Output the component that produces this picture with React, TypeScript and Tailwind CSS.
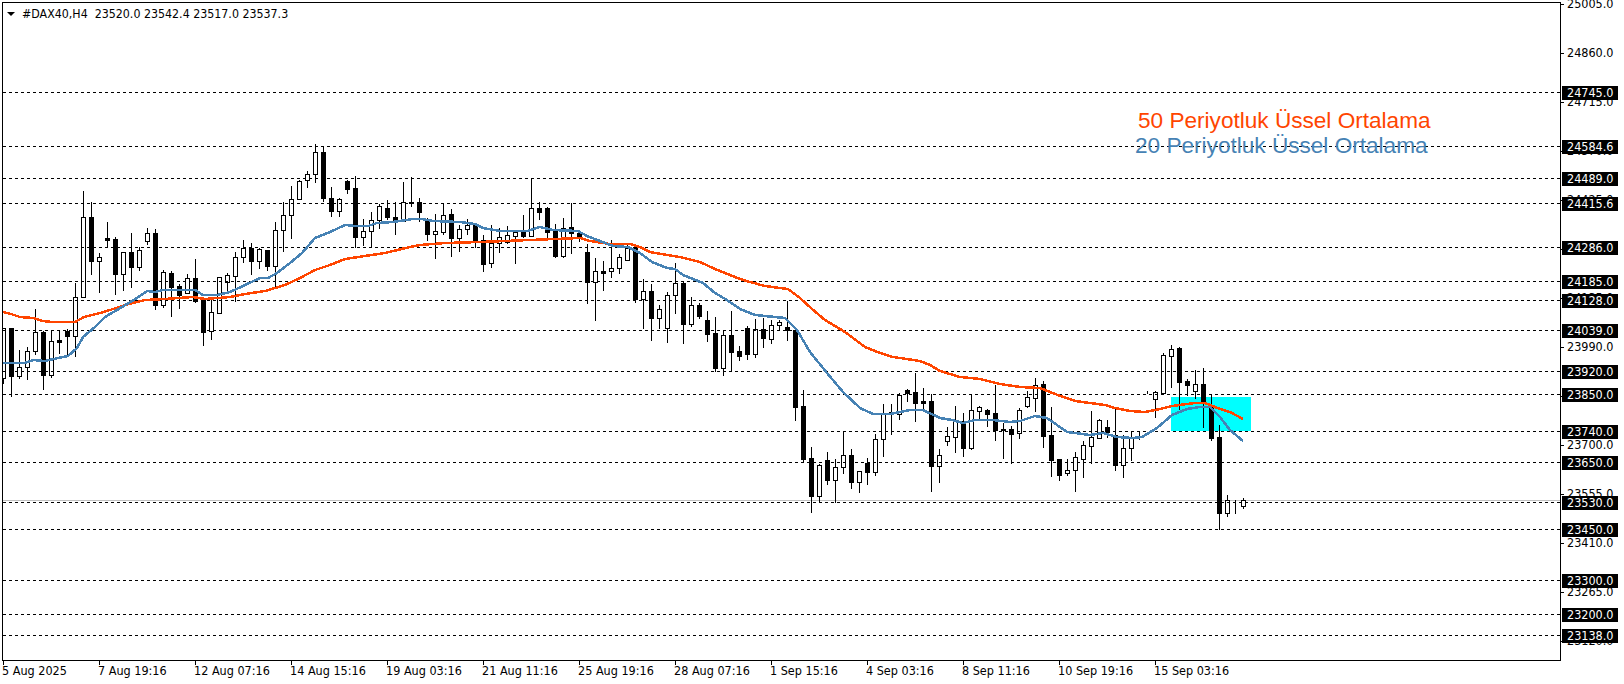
// DAX40 H4 chart, everything in the svg is in page pixels
type Candle = [number, number, number, number, number] // bull, high, bodyTop, bodyBottom, low

const candles: Candle[] = [
    [1, 328, 328, 378, 383], [0, 328, 328, 376, 396], [1, 350, 367, 376, 378], [1, 347, 351, 367, 379],
    [1, 309, 332, 351, 354], [0, 331, 332, 375, 389], [1, 330, 341, 375, 377], [0, 330, 340, 342, 353],
    [0, 329, 331, 336, 355], [1, 283, 297, 336, 356], [1, 191, 217, 297, 297], [0, 202, 217, 261, 274],
    [1, 253, 257, 261, 292], [0, 222, 238, 240, 246], [0, 237, 239, 274, 294], [1, 252, 252, 274, 290],
    [0, 233, 252, 267, 287], [1, 247, 250, 267, 270], [1, 228, 233, 241, 244], [0, 229, 233, 305, 309],
    [1, 270, 272, 305, 307], [0, 271, 273, 287, 316], [0, 284, 286, 295, 308], [1, 274, 278, 293, 293],
    [0, 259, 278, 301, 302], [0, 300, 300, 332, 345], [1, 300, 312, 331, 339], [1, 277, 277, 313, 313],
    [1, 273, 275, 282, 292], [1, 252, 257, 276, 301], [1, 240, 248, 257, 262], [0, 243, 248, 261, 274],
    [1, 248, 249, 261, 268], [0, 250, 250, 266, 270], [1, 222, 230, 266, 286], [1, 202, 215, 230, 251],
    [1, 186, 199, 215, 238], [1, 180, 181, 199, 199], [1, 171, 174, 180, 187], [1, 144, 152, 174, 182],
    [0, 146, 152, 198, 201], [0, 187, 198, 211, 216], [1, 198, 199, 211, 216], [0, 180, 181, 189, 193],
    [0, 176, 188, 237, 247], [1, 219, 231, 237, 245], [1, 212, 220, 231, 246], [1, 204, 206, 220, 228],
    [0, 200, 208, 217, 219], [0, 202, 217, 221, 234], [1, 182, 202, 221, 221], [0, 177, 202, 203, 206],
    [0, 198, 202, 212, 221], [0, 218, 219, 234, 240], [1, 214, 231, 234, 258], [1, 203, 215, 232, 234],
    [0, 209, 214, 238, 256], [1, 225, 229, 238, 251], [1, 219, 225, 229, 234], [0, 225, 225, 242, 247],
    [0, 235, 240, 264, 271], [1, 225, 243, 263, 267], [1, 228, 237, 243, 252], [1, 226, 235, 242, 243],
    [1, 232, 232, 236, 263], [0, 215, 232, 236, 237], [1, 178, 208, 236, 236], [0, 202, 208, 212, 219],
    [0, 207, 208, 232, 237], [0, 224, 231, 256, 257], [1, 218, 228, 256, 257], [0, 203, 227, 233, 253],
    [0, 230, 233, 238, 241], [0, 244, 252, 282, 303], [1, 258, 271, 282, 320], [0, 261, 271, 273, 290],
    [1, 240, 268, 271, 277], [1, 254, 257, 268, 273], [1, 243, 248, 260, 260], [0, 247, 247, 299, 302],
    [1, 279, 291, 299, 328], [0, 284, 291, 318, 340], [1, 305, 309, 318, 328], [1, 292, 295, 328, 342],
    [1, 263, 283, 295, 313], [0, 282, 283, 324, 343], [1, 297, 305, 324, 326], [0, 303, 305, 316, 318],
    [0, 311, 320, 334, 341], [0, 317, 333, 368, 371], [1, 330, 335, 368, 375], [0, 311, 335, 352, 371],
    [0, 346, 351, 356, 360], [0, 326, 328, 354, 359], [1, 319, 329, 354, 357], [0, 318, 329, 338, 347],
    [1, 320, 325, 339, 343], [1, 320, 322, 325, 329], [0, 301, 327, 330, 340], [0, 330, 330, 407, 420],
    [0, 390, 406, 459, 461], [0, 447, 458, 496, 512], [1, 464, 465, 496, 502], [0, 452, 460, 480, 484],
    [1, 459, 467, 480, 502], [1, 432, 455, 467, 473], [0, 449, 455, 482, 488], [1, 471, 471, 482, 492],
    [0, 458, 463, 472, 484], [1, 434, 439, 472, 475], [1, 404, 413, 439, 456], [0, 404, 412, 414, 434],
    [1, 393, 395, 414, 419], [0, 389, 390, 393, 401], [0, 373, 392, 403, 421], [0, 388, 401, 403, 409],
    [0, 394, 401, 466, 491], [1, 449, 455, 466, 482], [1, 427, 436, 441, 445], [1, 406, 421, 437, 452],
    [0, 413, 421, 448, 456], [1, 394, 410, 448, 449], [1, 406, 407, 411, 420], [0, 409, 410, 414, 426],
    [0, 385, 413, 430, 440], [0, 423, 429, 430, 458], [0, 426, 429, 434, 463], [1, 408, 410, 433, 438],
    [1, 391, 397, 406, 407], [1, 378, 385, 398, 411], [0, 381, 384, 436, 447], [0, 407, 435, 460, 476],
    [0, 459, 459, 475, 480], [1, 459, 470, 473, 475], [1, 452, 457, 470, 491], [1, 441, 445, 459, 477],
    [1, 411, 437, 446, 463], [1, 419, 420, 438, 438], [0, 420, 427, 432, 437], [0, 409, 435, 465, 470],
    [1, 435, 448, 465, 477], [1, 432, 437, 448, 460], [0, 432, 437, 437, 439], [0, 391, 392, 392, 393],
    [1, 391, 392, 399, 417], [1, 353, 355, 393, 394], [1, 345, 349, 356, 387], [0, 347, 348, 382, 409],
    [0, 379, 381, 385, 395], [1, 370, 384, 391, 398], [0, 368, 384, 403, 427], [0, 394, 405, 438, 440],
    [0, 425, 437, 513, 529], [1, 495, 500, 513, 516], [0, 500, 506, 506, 513], [1, 498, 500, 506, 508],
]

const emaSlow = '3,312 11,314 20,317 33,318 43,321 52,322 75,322 84,317 100,313 110,310 125,305 145,300 165,299 193,297 205,299 230,297 245,294 265,291 285,285 300,278 315,270 330,265 345,259 365,256 385,253 410,247 420,245 445,243 480,242 530,240 580,238 590,241 610,244 630,244 640,247 650,252 667,255 680,257 700,262 715,269 740,279 750,282 765,286 780,288 788,289 800,298 812,309 825,320 845,332 865,347 880,353 893,357 900,358 920,361 930,365 940,371 960,377 980,379 1000,384 1020,387 1040,388 1055,394 1075,401 1090,403 1105,405 1115,408 1130,411 1145,412 1160,409 1172,406 1195,403 1205,403 1220,409 1230,412 1243,419'
const emaFast = '3,363 25,363 33,360 45,361 58,358 68,356 77,348 83,337 95,327 105,317 117,310 127,304 137,298 147,291 155,292 163,290 195,290 203,295 217,295 230,292 243,286 260,278 268,278 277,273 290,263 302,253 315,238 330,232 345,225 355,226 368,226 377,223 393,222 413,219 422,219 433,221 460,222 475,224 483,228 500,231 527,231 540,227 553,230 578,231 587,236 600,241 613,246 628,247 640,253 652,262 667,268 675,269 683,275 703,283 715,293 727,300 740,309 755,315 785,318 797,330 810,352 827,373 843,392 860,408 873,414 890,414 910,410 923,410 940,418 952,420 963,423 975,420 993,420 1010,422 1020,421 1035,416 1047,418 1067,432 1090,435 1103,433 1117,437 1133,438 1142,437 1157,428 1172,415 1187,409 1200,407 1210,407 1220,417 1230,430 1243,441'

const levels = [
    { y: 92, label: '24745.0' }, { y: 146, label: '24584.6' }, { y: 178, label: '24489.0' },
    { y: 203, label: '24415.6' }, { y: 247, label: '24286.0' }, { y: 281, label: '24185.0' },
    { y: 300, label: '24128.0' }, { y: 330, label: '24039.0' }, { y: 371, label: '23920.0' },
    { y: 394, label: '23850.0' }, { y: 431, label: '23740.0' }, { y: 462, label: '23650.0' },
    { y: 502, label: '23530.0' }, { y: 529, label: '23450.0' }, { y: 580, label: '23300.0' },
    { y: 614, label: '23200.0' }, { y: 635, label: '23138.0' },
]

const priceTicks = ['25005.0', '24860.0', '24715.0', '24570.0', '24425.0', '24280.0', '24135.0', '23990.0', '23845.0', '23700.0', '23555.0', '23410.0', '23265.0', '23120.0']

const timeTicks = ['5 Aug 2025', '7 Aug 19:16', '12 Aug 07:16', '14 Aug 15:16', '19 Aug 03:16', '21 Aug 11:16', '25 Aug 19:16', '28 Aug 07:16', '1 Sep 15:16', '4 Sep 03:16', '8 Sep 11:16', '10 Sep 19:16', '15 Sep 03:16']

function Chart() {
    return (
        <svg className="absolute inset-0" width={1557} height={657} viewBox="3 3 1557 657" shapeRendering="crispEdges">
            <rect x={1171} y={397} width={80} height={34} fill="#00ffff" />
            <line x1={3} x2={1560} y1={500.5} y2={500.5} stroke="#c0c0c0" />
            {candles.map(([bull, high, top, bottom, low], i) => {
                const x = 3 + 8 * i + 0.5
                return (
                    <g key={i}>
                        <line x1={x} x2={x} y1={high} y2={low + 1} stroke="#000" />
                        <rect x={x - 2} y={top + 0.5} width={4} height={bottom - top} fill={bull ? '#fff' : '#000'} stroke="#000" />
                    </g>
                )
            })}
            {levels.map((level) => (
                <line key={level.y} x1={3} x2={1560} y1={level.y + 0.5} y2={level.y + 0.5} stroke="#000" strokeDasharray="3 3" />
            ))}
            <polyline points={emaSlow} fill="none" stroke="#ff4500" strokeWidth={2.5} />
            <polyline points={emaFast} fill="none" stroke="#4682b4" strokeWidth={2.5} />
        </svg>
    )
}

function PriceAxis() {
    return (
        <div className="relative h-[659px] flex-1 pt-[2px]">
            {priceTicks.map((price) => (
                <div key={price} className="flex h-[49px] items-start gap-[3px]">
                    <div className="h-px w-[3px] bg-black" />
                    <span className="-mt-[7px] h-[14px] leading-[14px]">{price}</span>
                </div>
            ))}
            {/* price tags of the drawn levels sit over the scale */}
            {levels.map((level) => (
                <span
                    key={level.label}
                    className="absolute left-px h-[14px] w-[56px] bg-black pl-[5px] leading-[14px] text-white"
                    style={{ top: level.y - 8 }}
                >
                    {level.label}
                </span>
            ))}
        </div>
    )
}

function TimeAxis() {
    return (
        <div className="flex h-[23px] shrink-0">
            {timeTicks.map((time) => (
                <div key={time} className="flex w-[96px] shrink-0 flex-col">
                    <div className="ml-px h-[4px] w-px bg-black" />
                    <span className="-mt-[2px] whitespace-nowrap leading-[16px]">{time}</span>
                </div>
            ))}
        </div>
    )
}

export default function App() {
    return (
        <div className="flex h-[684px] w-[1624px] flex-col overflow-hidden bg-white pl-[2px] pt-[2px] font-['DejaVu_Sans_Condensed','DejaVu_Sans',sans-serif] text-[12.5px] text-black">
            <div className="flex h-[659px] shrink-0">
                <div className="relative h-[659px] w-[1559px] border border-black pl-[4px] pt-[3px]">
                    <Chart />
                    <div className="relative flex h-[16px] items-center gap-[7px] whitespace-pre text-[12.3px]">
                        <svg width={8} height={4} viewBox="0 0 8 4">
                            <polygon points="0,0 8,0 4,4" fill="#000" />
                        </svg>
                        <span>#DAX40,H4  23520.0 23542.4 23517.0 23537.3</span>
                    </div>
                    <span className="absolute left-[1135px] top-[107px] whitespace-nowrap font-['Liberation_Sans',sans-serif] text-[22.6px] leading-[22px] text-[#ff4500]">
                        50 Periyotluk Üssel Ortalama
                    </span>
                    <span className="absolute left-[1132px] top-[132px] whitespace-nowrap font-['Liberation_Sans',sans-serif] text-[22.6px] leading-[22px] text-[#4682b4]">
                        20 Periyotluk Üssel Ortalama
                    </span>
                </div>
                <PriceAxis />
            </div>
            <TimeAxis />
        </div>
    )
}
